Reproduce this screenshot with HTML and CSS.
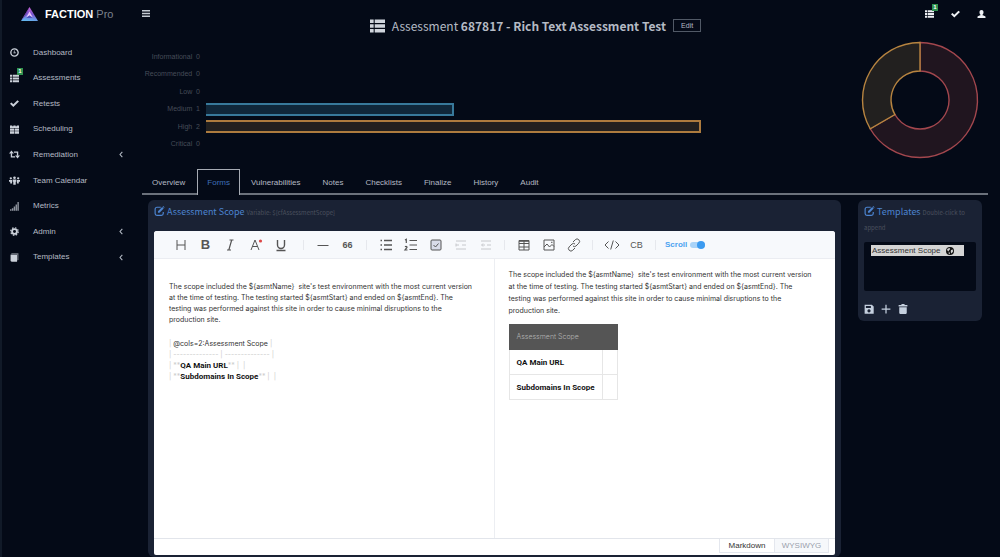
FILE: index.html
```html
<!DOCTYPE html>
<html lang="en">
<head>
<meta charset="utf-8">
<title>Faction Pro - Assessment</title>
<link rel="stylesheet" href="styles.css">
</head>
<body>
<svg class="sprite" aria-hidden="true">
  <symbol id="list" viewBox="0 0 14 12"><path d="M0 0h3.4v3.2H0zM4.4 0H14v3.2H4.4zM0 4.4h3.4v3.2H0zM4.4 4.4H14v3.2H4.4zM0 8.8h3.4V12H0zM4.4 8.8H14V12H4.4z"/></symbol>
  <symbol id="check" viewBox="0 0 16 14"><path d="M0 7.6 2.6 5l3.3 3.2L13.2 1 16 3.6 5.9 13.4z"/></symbol>
  <symbol id="user" viewBox="0 0 16 16"><path d="M8 0c2.500 0 4 1.800 4 4.400 0 2-.8 3.800-1.900 4.700v1.200c2.800.8 5.400 1.500 5.900 3.200V16H0v-2.500c.5-1.700 3.100-2.400 5.900-3.200V9.100C4.800 8.200 4 6.400 4 4.400 4 1.800 5.500 0 8 0z"/></symbol>
  <symbol id="edit" viewBox="0 0 16 16"><path d="M10 2H4a3 3 0 0 0-3 3v7a3 3 0 0 0 3 3h7a3 3 0 0 0 3-3V9.500" fill="none" stroke="currentColor" stroke-width="1.900"/><path d="M5.500 8.200 12.300 1.400l2.400 2.400L8 10.600H5.500zM13 .7l.9-.7L16 2.100l-.7 1z"/></symbol>
  <symbol id="left" viewBox="0 0 6 10"><path d="M5 1 1.500 5 5 9" fill="none" stroke="currentColor" stroke-width="1.600"/></symbol>
</svg>
<div class="app">
  <aside class="sidebar">
    <a class="brand" href="#">
      <svg class="logo" viewBox="0 0 17 14"><defs><linearGradient id="lg" x1="0.7" y1="0" x2="0.5" y2="1"><stop offset="0" stop-color="#d568d8"/><stop offset=".5" stop-color="#7a55cf"/><stop offset="1" stop-color="#64b5ee"/></linearGradient></defs><path d="M8.500 0 17 14H0z" fill="url(#lg)"/><path d="M8.500 0 5 8 0 14z" fill="#7540a8"/><path d="m8.500 4.500 3.300 6-3.300-2-3.300 2z" fill="#f0c5ff"/><path d="m8.500 8.500 3.300 2.500H5.200z" fill="#4b55c0"/></svg>
      <span class="brand-name">FACTION <span class="brand-pro">Pro</span></span>
    </a>
    <nav class="menu" aria-label="Main">
      <a href="#"><svg class="mi" viewBox="0 0 16 16"><circle cx="8" cy="8" r="6.500" fill="none" stroke="currentColor" stroke-width="2.400"/><path d="m7 9.500 1-5M7 8.500h3.500" fill="none" stroke="currentColor" stroke-width="1.300"/></svg>Dashboard</a>
      <a href="#"><span class="badged"><svg class="mi"><use href="#list"/></svg><b class="badge">1</b></span>Assessments</a>
      <a href="#"><svg class="mi"><use href="#check"/></svg>Retests</a>
      <a href="#"><svg class="mi" viewBox="0 0 16 16"><path d="M0 1h4v1h2V1h4v1h2V1h4v4.300H0zM0 6.300h7.500v4H0zM8.500 6.300H16v4H8.500zM0 11.300h7.500v4.200H0zM8.500 11.300H16v4.200H8.500z"/></svg>Scheduling</a>
      <a href="#"><svg class="mi wide" viewBox="0 0 18 14"><path d="M4 5v6h6M14 9V3H8" fill="none" stroke="currentColor" stroke-width="2.200"/><path d="m0 5.500 4-5 4 5zM10 8.500h8l-4 5z"/></svg>Remediation<svg class="caret"><use href="#left"/></svg></a>
      <a href="#"><svg class="mi wide" viewBox="0 0 18 14"><circle cx="3" cy="3.500" r="1.900"/><circle cx="9" cy="2.500" r="2.200"/><circle cx="15" cy="3.500" r="1.900"/><path d="M0 6h5v6H2V9H0zM6 5.500h6V9h-1v5H7V9H6zM13 6h5v3h-2v3h-3z"/></svg>Team Calendar</a>
      <a href="#"><svg class="mi dim" viewBox="0 0 16 16"><path d="M0 13h2.500v2.500H0zM3.300 11h2.500v4.500H3.300zM6.600 8h2.500v7.500H6.600zM9.900 4.500h2.500v11H9.900zM13.200 0h2.500v15.500h-2.500z"/></svg>Metrics</a>
      <a href="#"><svg class="mi" viewBox="0 0 16 16"><circle cx="8" cy="8" r="4.300" fill="none" stroke="currentColor" stroke-width="3.300"/><circle cx="8" cy="8" r="6.700" fill="none" stroke="currentColor" stroke-width="2.200" stroke-dasharray="2.700 2.562"/></svg>Admin<svg class="caret"><use href="#left"/></svg></a>
      <a href="#"><svg class="mi" viewBox="0 0 16 16"><path d="M1 2.500 3 .5h12v12l-2 1V2.500z" opacity=".6"/><path d="M1 3h11.500v12.500H3l-2-1.500z"/></svg>Templates<svg class="caret"><use href="#left"/></svg></a>
    </nav>
  </aside>

  <main class="main">
    <header class="topbar">
      <button class="plain burger" aria-label="Toggle menu"><svg viewBox="0 0 8 7"><path d="M0 0h8v1.400H0zM0 2.800h8v1.400H0zM0 5.600h8V7H0z"/></svg></button>
      <h1 class="title"><svg class="title-icon"><use href="#list"/></svg><span>Assessment <b>687817 - Rich Text Assessment Test</b></span><button class="edit">Edit</button></h1>
      <div class="actions">
        <button class="plain badged" aria-label="Assessments"><svg><use href="#list"/></svg><b class="badge">1</b></button>
        <button class="plain" aria-label="Retests"><svg><use href="#check"/></svg></button>
        <button class="plain" aria-label="Account"><svg><use href="#user"/></svg></button>
      </div>
    </header>

    <section class="charts" aria-label="Findings">
      <div class="bars">
        <span>Informational&nbsp; 0</span><i></i>
        <span>Recommended&nbsp; 0</span><i></i>
        <span>Low&nbsp; 0</span><i></i>
        <span>Medium&nbsp; 1</span><i class="bar medium" style="width:50%"></i>
        <span>High&nbsp; 2</span><i class="bar high" style="width:100%"></i>
        <span>Critical&nbsp; 0</span><i></i>
      </div>
      <svg class="donut" viewBox="0 0 118 118" role="img" aria-label="Findings by status">
        <path d="M59 1.500a57.500 57.500 0 1 1-49.800 86.250L33.900 73.500A29 29 0 1 0 59 30z" fill="#20151f" stroke="#a3474e" stroke-width="1.400"/>
        <path d="M59 1.500A57.500 57.500 0 0 0 9.200 87.750L33.900 73.500A29 29 0 0 1 59 30z" fill="#22201f" stroke="#b78440" stroke-width="1.400"/>
      </svg>
    </section>

    <nav class="tabs" aria-label="Assessment sections">
      <a href="#">Overview</a><a href="#" class="active" aria-current="page">Forms</a><a href="#">Vulnerabilities</a><a href="#">Notes</a><a href="#">Checklists</a><a href="#">Finalize</a><a href="#">History</a><a href="#">Audit</a>
    </nav>

    <div class="content">
      <section class="panel scope">
        <h2 class="heading"><svg><use href="#edit"/></svg> Assessment Scope <small>Variable: ${cfAssessmentScope}</small></h2>
        <div class="editor">
          <div class="toolbar">
            <div class="group first">
              <button aria-label="Heading"><svg viewBox="0 0 16 16"><path d="M4 3v10M12 3v10M4 8h8"/></svg></button>
              <button class="bold">B</button>
              <button aria-label="Italic"><svg viewBox="0 0 16 16"><path d="M6.500 3h4M4 13h4M8.700 3l-2.900 10" stroke-width="1.200"/></svg></button>
              <button aria-label="Text colour"><svg viewBox="0 0 16 16"><path d="m3 13 4-10 4 10M4.500 9.500h5"/><circle cx="12.500" cy="4" r="1.600" class="red"/></svg></button>
              <button aria-label="Underline"><svg viewBox="0 0 16 16"><path d="M4.500 3v5a3.500 3.500 0 0 0 7 0V3M3.500 13.500h9" stroke-width="1.400"/></svg></button>
            </div>
            <span class="sep"></span>
            <div class="group">
              <button aria-label="Line"><svg viewBox="0 0 16 16"><path d="M2.500 8.500h11"/></svg></button>
              <button class="quote">66</button>
            </div>
            <span class="sep"></span>
            <div class="group">
              <button aria-label="Unordered list"><svg viewBox="0 0 16 16"><path d="M6 3.500h8M6 8h8M6 12.500h8M2.500 3.500H4M2.500 8H4M2.500 12.500H4" stroke-width="1.300"/></svg></button>
              <button aria-label="Ordered list"><svg viewBox="0 0 16 16"><path d="M6.500 3.500H14M6.500 8H14M6.500 12.500H14M2 3l1.300-.8V6M2 9.800c1-.8 2.200-.3 2 .6L2 13h2.500" stroke-width="1.200"/></svg></button>
              <button aria-label="Task"><svg viewBox="0 0 16 16"><rect x="3" y="3" width="10" height="10" rx="1" fill="#d9dbe8"/><path d="m5.500 8 2 2 3-3.500"/></svg></button>
              <button aria-label="Indent" class="faded"><svg viewBox="0 0 16 16"><path d="M3 4h10M9 8h4M3 12h10M3 6.500v3M3 8h3"/></svg></button>
              <button aria-label="Outdent" class="faded"><svg viewBox="0 0 16 16"><path d="M3 4h10M9 8h4M3 12h10M5 6.500 3.500 8 5 9.500M4 8h3"/></svg></button>
            </div>
            <span class="sep"></span>
            <div class="group">
              <button aria-label="Table"><svg viewBox="0 0 16 16"><path d="M3 3.500h10v9.500H3zM3 6.500h10M3 10h10M8 3.500V13M3 4.300h10"/></svg></button>
              <button aria-label="Image"><svg viewBox="0 0 16 16"><path d="M3 3h10v10H3zM3 10l3-3 2.500 3L11 7.500l2 2M10 5.300h1.500"/></svg></button>
              <button aria-label="Link"><svg viewBox="0 0 16 16"><path d="m7 5 2.300-2.300a2.300 2.300 0 0 1 3.500 3.500L10 9a2.300 2.300 0 0 1-3 0M9 11l-2.300 2.300a2.300 2.300 0 0 1-3.500-3.500L6 7a2.300 2.300 0 0 1 3 0"/></svg></button>
            </div>
            <span class="sep"></span>
            <div class="group">
              <button aria-label="Code"><svg viewBox="0 0 16 16"><path d="M4.500 4.500 1 8l3.500 3.500M11.500 4.500 15 8l-3.500 3.500M9.300 3.500l-2.600 9"/></svg></button>
              <button class="cb">CB</button>
            </div>
            <span class="sep"></span>
            <label class="scroll">Scroll <input type="checkbox" checked></label>
          </div>
          <div class="panes">
            <div class="source" role="textbox" aria-label="Markdown source" contenteditable="true" spellcheck="false">
              <p>The scope included the ${asmtName}&nbsp; site's test environment with the most current version at the time of testing. The testing started ${asmtStart} and ended on ${asmtEnd}. The testing was performed against this site in order to cause minimal disruptions to the production site.</p>
              <p><i>|</i> @cols=2:Assessment Scope <i>|</i><br><i>| -------------- | -------------- |</i><br><i>| **</i><b>QA Main URL</b><i>** |&nbsp; |</i><br><i>| **</i><b>Subdomains In Scope</b><i>** |&nbsp; |</i></p>
            </div>
            <div class="preview">
              <p>The scope included the ${asmtName}&nbsp; site's test environment with the most current version at the time of testing. The testing started ${asmtStart} and ended on ${asmtEnd}. The testing was performed against this site in order to cause minimal disruptions to the production site.</p>
              <table>
                <thead><tr><th colspan="2">Assessment Scope</th></tr></thead>
                <tbody><tr><td>QA Main URL</td><td></td></tr><tr><td>Subdomains In Scope</td><td></td></tr></tbody>
              </table>
            </div>
          </div>
          <div class="modes"><button class="on">Markdown</button><button>WYSIWYG</button></div>
        </div>
      </section>

      <section class="panel templates">
        <h2 class="heading"><svg><use href="#edit"/></svg> Templates <small>Double-click to append</small></h2>
        <ul class="listbox" role="listbox" aria-label="Templates">
          <li role="option" aria-selected="true">Assessment Scope <svg viewBox="0 0 16 16"><circle cx="8" cy="8" r="8" fill="#111"/><path d="M3 3.500 7 2l1.500 2L6 6.500 5 9 2 6zM10 6l3.500-1L14 9l-3 4-1.500-3zM6 10l2 2-1 2.500-2-2z" fill="#d4d4d4"/></svg></li>
        </ul>
        <div class="tools">
          <button class="plain" aria-label="Save"><svg viewBox="0 0 16 16"><path fill-rule="evenodd" d="M1 1h11.500L15.500 4v11.500H1zM3 3v3.500h8V3zM8 8.500a2.500 2.500 0 1 0 .01 0z"/></svg></button>
          <button class="plain" aria-label="Add"><svg viewBox="0 0 16 16"><path d="M7 1h2v6h6v2H9v6H7V9H1V7h6z"/></svg></button>
          <button class="plain" aria-label="Delete"><svg viewBox="0 0 16 16"><path d="M1 1.500h4L6 0h4l1 1.500h4V4H1zM2 5h12v9.500L13 16H3l-1-1.500z"/></svg></button>
        </div>
      </section>
    </div>
  </main>
</div>
</body>
</html>
```
FILE: styles.css
```css
* { box-sizing: border-box; }
body { margin: 0; background: #040a17; color: #b4bac4; font: 8px/12px "Liberation Sans", Arial, sans-serif; }
a { color: inherit; text-decoration: none; }
button { font: inherit; color: inherit; cursor: pointer; }
svg { fill: currentColor; flex: none; }
h1, h2, p, ul { margin: 0; padding: 0; }
.sprite { display: none; }
.plain { border: 0; background: none; padding: 0; display: flex; }

.app { display: flex; height: 100vh; overflow: hidden; border-left: 2px solid #111a28; }
.sidebar { width: 140px; flex: none; }
.brand { display: flex; align-items: center; gap: 7px; height: 28px; padding-left: 19px; color: #fff; }
.logo { width: 17px; height: 14px; }
.brand-name { font-size: 11px; font-weight: bold; white-space: nowrap; }
.brand-pro { font-weight: normal; color: #7c828d; }
.menu { display: grid; grid-auto-rows: 1fr; height: 230px; margin-top: 12px; }
.menu a { display: flex; align-items: center; gap: 14px; padding: 0 19px 0 8px; }
.mi { width: 9px; height: 9px; color: #cbd1da; }
.wide { width: 11px; margin: 0 -1px; }
.dim { opacity: .7; }
.caret { width: 4px; height: 7px; margin-left: auto; }
.badged { position: relative; display: flex; }
.badge { position: absolute; top: -6px; right: -4px; width: 6px; height: 7px; background: #2f9150; color: #fff; font-size: 6px; line-height: 7px; text-align: center; }

.main { flex: 1; min-width: 0; display: flex; flex-direction: column; padding-right: 12px; }
.topbar { display: flex; align-items: center; height: 47px; flex: none; }
.burger { align-self: flex-start; margin-top: 10px; color: #c6ccd4; }
.burger svg { width: 8px; height: 7px; }
.title { flex: 1; display: flex; align-items: center; justify-content: center; gap: 7px; padding: 4px 4px 0 0; font: 12px/20px "Noto Sans CJK SC", "Noto Sans", sans-serif; }
.title b { font-weight: 600; }
.title-icon { width: 15px; height: 14px; color: #d0d5dd; }
.edit { height: 13px; padding: 0 7px; border: 1px solid #515966; background: transparent; font: 7px/10px "Liberation Sans", Arial, sans-serif; }
.actions { display: flex; align-self: flex-start; gap: 17px; padding: 10px 2px 0 0; color: #eef1f5; }
.actions svg { width: 9px; height: 8px; }

.charts { display: grid; grid-template-columns: 1fr 118px; padding: 1px 9px 0 0; height: 123px; flex: none; }
.bars { display: grid; grid-template-columns: 58px 1fr; grid-auto-rows: 1fr; align-items: center; column-gap: 6px; height: 105px; margin-right: 160px; color: #464c57; font-size: 7px; text-align: right; white-space: nowrap; }
.bar { height: 13px; border: 2px solid; border-left: 0; }
.medium { background: #10273a; border-color: #38799b; }
.high { background: #22201f; border-color: #ad7b3e; }
.donut { width: 118px; height: 118px; margin-top: -7px; }

.tabs { display: flex; height: 25px; flex: none; border-bottom: 2px solid #6b717b; }
.tabs a { padding: 0 11px; line-height: 25px; }
.tabs a:first-child { padding: 0 12px 0 10px; }
.tabs .active { margin: -1px 0 -2px; padding: 0 9px; border: 1px solid #a6abb3; border-bottom: 0; background: #040a17; color: #3f6fb8; }

.content { flex: 1; min-height: 0; display: grid; grid-template-columns: 1fr 124px; gap: 17px; align-items: start; padding: 5px 6px 0; }
.panel { border-radius: 6px; background: #1a2234; }
.scope { display: flex; flex-direction: column; height: 100%; padding: 5px 6px 2px; }
.heading { color: #4c84d0; font: 400 9px/14px "Noto Sans CJK SC", "Noto Sans", sans-serif; }
.heading svg { width: 11px; height: 10px; vertical-align: -1px; }
.heading small { color: #4b515e; font-size: 6px; }

.editor { flex: 1; min-height: 0; display: flex; flex-direction: column; margin-top: 11px; border-radius: 3px 3px 2px 2px; background: #fff; color: #333; overflow: hidden; }
.toolbar { display: flex; align-items: center; height: 28px; flex: none; padding-left: 14px; background: #f7f9fc; border-bottom: 1px solid #ebedf2; color: #555; }
.group { display: flex; }
.group button { width: 25px; height: 25px; padding: 0; border: 0; background: none; display: flex; align-items: center; justify-content: center; }
.group svg { width: 16px; height: 16px; fill: none; stroke: currentColor; }
.group .red { fill: #dc4646; stroke: none; }
.first { margin-right: 4px; }
.toolbar .bold { font-size: 13px; font-weight: bold; }
.toolbar .quote { font-weight: bold; font-size: 9px; }
.toolbar .cb { font-size: 9px; }
.toolbar .faded { color: #c6c8cc; }
.sep { width: 1px; height: 10px; margin: 0 6px; background: #e6e8ed; }
.scroll { display: flex; align-items: center; gap: 3px; margin-left: 3px; color: #4ba2f0; font-weight: bold; }
.scroll input { appearance: none; width: 15px; height: 6px; margin: 0; border-radius: 3px; background: #a9d3f8; display: flex; align-items: center; justify-content: flex-end; }
.scroll input::before { content: ""; width: 8px; height: 8px; border-radius: 50%; background: #3c9bf0; }
.panes { flex: 1; min-height: 0; display: grid; grid-template-columns: 1fr 1fr; font-family: Inter, "Liberation Sans", sans-serif; font-size: 7px; }
.source { padding: 22px 20px 22px 15px; border-right: 1px solid #eceef2; line-height: 11px; outline: 0; }
.source p + p { margin-top: 13px; }
.source i { font-style: normal; color: #ccc; }
.source b, td { color: #111; font: bold 8px/11px Roboto, "Liberation Sans", sans-serif; }
.preview { padding: 10px 22px 10px 14px; }
table { margin-top: 7px; border-collapse: collapse; font-size: 7px; }
th, td { height: 25px; padding: 0 7px; border: 1px solid #e6e6e6; text-align: left; }
th { border-color: #555; background: #555; color: #b0b0b0; font-weight: 300; }
.modes { display: flex; justify-content: flex-end; height: 17px; flex: none; padding: 0 6px 2px; border-top: 1px solid #e2e5eb; }
.modes button { width: 55px; padding: 1px 0 0; border: 1px solid #e4e7ee; border-top: 0; background: #f6f8fb; color: #9a9fac; }
.modes .on { background: #fff; color: #333; border-right: 0; }

.templates { padding: 5px 6px 7px; }
.listbox { height: 49px; margin-top: 7px; padding: 3px 12px 0 7px; border-radius: 2px; background: #040a17; list-style: none; }
.listbox li { display: flex; align-items: center; gap: 6px; height: 11px; padding-left: 1px; background: #d4d4d4; color: #333; white-space: nowrap; }
.listbox svg { width: 8px; height: 8px; }
.tools { display: flex; gap: 7px; margin-top: 13px; color: #c5d0de; }
.tools svg { width: 10px; height: 10px; }
```
